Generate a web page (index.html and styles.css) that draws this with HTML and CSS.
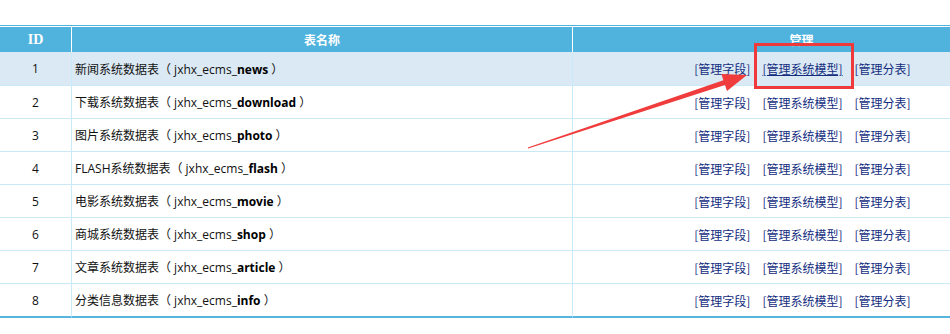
FILE: index.html
```html
<!DOCTYPE html>
<html lang="zh-CN">
<head>
<meta charset="utf-8">
<title>数据表管理</title>
<link rel="stylesheet" href="styles.css">
</head>
<body>
<div class="page">
  <div class="table-wrap">
    <table class="list">
      <thead>
        <tr>
          <th class="c-id id-head">ID</th>
          <th class="c-name">表名称</th>
          <th class="c-manage">管理</th>
        </tr>
      </thead>
      <tbody>
        <tr class="hover">
          <td class="c-id">1</td>
          <td class="c-name">新闻系统数据表（ jxhx_ecms_<b>news</b> ）</td>
          <td class="c-manage"><div class="links"><a href="#">[管理字段]</a><a href="#" class="u">[管理系统模型]</a><a href="#">[管理分表]</a></div></td>
        </tr>
        <tr>
          <td class="c-id">2</td>
          <td class="c-name">下载系统数据表（ jxhx_ecms_<b>download</b> ）</td>
          <td class="c-manage"><div class="links"><a href="#">[管理字段]</a><a href="#">[管理系统模型]</a><a href="#">[管理分表]</a></div></td>
        </tr>
        <tr>
          <td class="c-id">3</td>
          <td class="c-name">图片系统数据表（ jxhx_ecms_<b>photo</b> ）</td>
          <td class="c-manage"><div class="links"><a href="#">[管理字段]</a><a href="#">[管理系统模型]</a><a href="#">[管理分表]</a></div></td>
        </tr>
        <tr>
          <td class="c-id">4</td>
          <td class="c-name">FLASH系统数据表（ jxhx_ecms_<b>flash</b> ）</td>
          <td class="c-manage"><div class="links"><a href="#">[管理字段]</a><a href="#">[管理系统模型]</a><a href="#">[管理分表]</a></div></td>
        </tr>
        <tr>
          <td class="c-id">5</td>
          <td class="c-name">电影系统数据表（ jxhx_ecms_<b>movie</b> ）</td>
          <td class="c-manage"><div class="links"><a href="#">[管理字段]</a><a href="#">[管理系统模型]</a><a href="#">[管理分表]</a></div></td>
        </tr>
        <tr>
          <td class="c-id">6</td>
          <td class="c-name">商城系统数据表（ jxhx_ecms_<b>shop</b> ）</td>
          <td class="c-manage"><div class="links"><a href="#">[管理字段]</a><a href="#">[管理系统模型]</a><a href="#">[管理分表]</a></div></td>
        </tr>
        <tr>
          <td class="c-id">7</td>
          <td class="c-name">文章系统数据表（ jxhx_ecms_<b>article</b> ）</td>
          <td class="c-manage"><div class="links"><a href="#">[管理字段]</a><a href="#">[管理系统模型]</a><a href="#">[管理分表]</a></div></td>
        </tr>
        <tr class="last">
          <td class="c-id">8</td>
          <td class="c-name">分类信息数据表（ jxhx_ecms_<b>info</b> ）</td>
          <td class="c-manage"><div class="links"><a href="#">[管理字段]</a><a href="#">[管理系统模型]</a><a href="#">[管理分表]</a></div></td>
        </tr>
      </tbody>
    </table>
  </div>
  <svg class="annot" width="950" height="334" viewBox="0 0 950 334" aria-hidden="true">
    <rect x="755.5" y="44.5" width="97" height="43" fill="none" stroke="#f0393b" stroke-width="3"/>
    <polygon points="527.8,147.4 723.4,80.2 721.4,74.1 747,75 727.0,91.1 725.0,85.0 528.2,148.6" fill="#f03c3c"/>
  </svg>
</div>
</body>
</html>
```

FILE: styles.css
```css
html, body {
  margin: 0;
  padding: 0;
  background: #fff;
  overflow: hidden;
}

.page {
  position: relative;
  width: 950px;
  height: 334px;
  padding-top: 25px;
  box-sizing: border-box;
  font-family: "Open Sans", "Noto Sans CJK SC", sans-serif;
  font-size: 12px;
  color: #111;
}

.table-wrap {
  width: 950px;
  overflow: hidden;
}

.list {
  width: 1030px;
  table-layout: fixed;
  border-collapse: separate;
  border-spacing: 0;
  border-top: 1px solid #4fb3de;
}

.list th {
  box-sizing: border-box;
  height: 26px;
  padding: 0;
  background: #4fb3de;
  color: #fff;
  font-family: "Noto Sans CJK SC", sans-serif;
  font-weight: bold;
  font-size: 12px;
  text-align: center;
  border-top: 1px solid #fff;
  border-right: 1px solid #fff;
}

.list th.id-head {
  font-family: "Liberation Serif", serif;
  font-size: 14px;
}

.list th:last-child {
  border-right: 0;
}

.c-id { width: 72px; }
.c-name { width: 501px; }
.c-manage { width: 457px; }

.list td {
  box-sizing: border-box;
  height: 33px;
  padding: 0;
  border-bottom: 1px solid #cbeaf7;
  border-right: 1px solid #c8eafa;
  font-family: "Open Sans", "Noto Sans CJK SC", sans-serif;
  font-size: 12px;
  color: #111;
}

.list tbody tr:first-child td {
  height: 34px;
}

.list td:last-child {
  border-right: 0;
}

.list tr.last td {
  height: 34px;
  border-bottom: 2px solid #56b4dd;
}

.list tr.hover td {
  background: #dbe9f4;
}

.list td.c-id {
  text-align: center;
}

.list td.c-name {
  padding-left: 3px;
  white-space: nowrap;
}

.list td.c-name b {
  font-weight: bold;
  color: #000;
}

.links {
  display: flex;
  justify-content: center;
  gap: 12px;
  padding-left: 2px;
}

.links a {
  color: #132d80;
  text-decoration: none;
  font-family: "Noto Sans CJK SC", sans-serif;
  font-size: 12px;
}

.links a.u {
  text-decoration: underline;
}

.annot {
  position: absolute;
  left: 0;
  top: 0;
  pointer-events: none;
}
```
